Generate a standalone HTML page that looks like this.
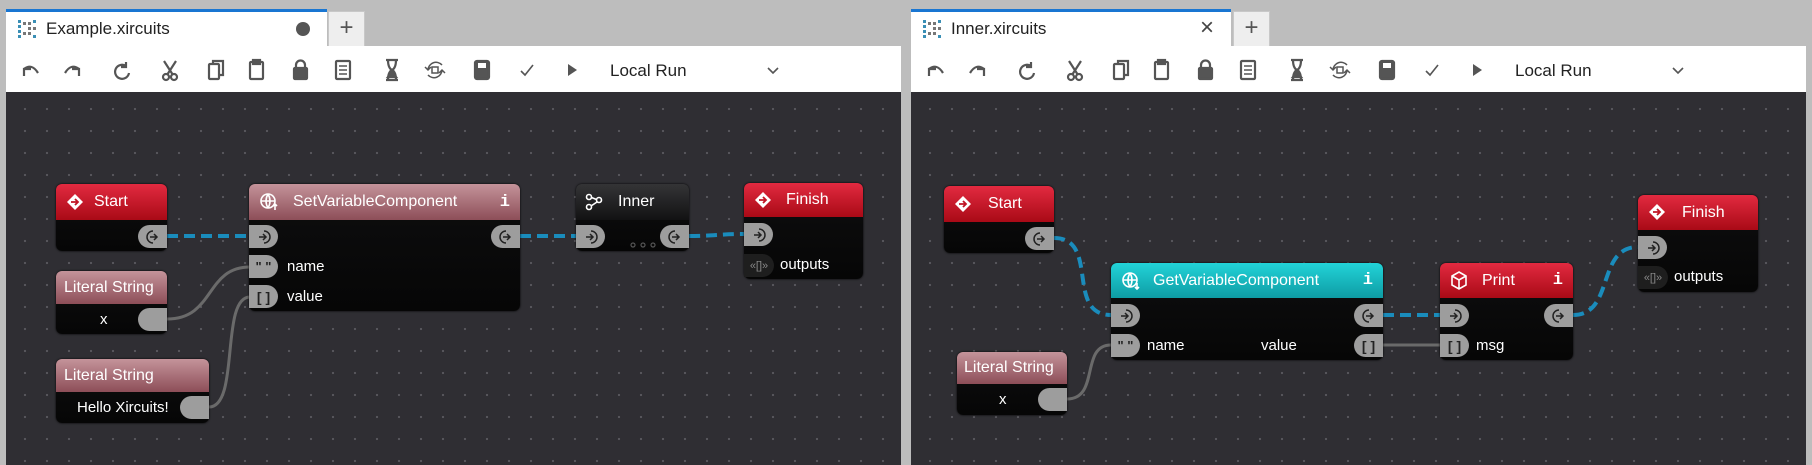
<!DOCTYPE html>
<html><head><meta charset="utf-8"><style>
*{box-sizing:border-box;margin:0;padding:0}
body{width:1812px;height:465px;background:#bdbdbd;position:relative;overflow:hidden;font-family:"Liberation Sans",Arial,sans-serif}
.abs{position:absolute}
.tab{position:absolute;top:9px;height:37px;background:#fff;border-top:3px solid #1976d2;font-size:17px;color:#222}
.plus{position:absolute;top:11px;height:35px;width:37px;background:#eee;border:1px solid #c8c8c8;border-bottom:none;font-size:24px;color:#555;text-align:center;line-height:32px}
.tb{position:absolute;top:46px;height:46px;width:895px;background:#fff}
.canvas{position:absolute;top:92px;height:373px;width:895px;background-color:#2f2e33;background-image:radial-gradient(circle,#56555b 1.1px,transparent 1.3px);background-size:22px 22px;background-position:8px 6px}
.node{position:absolute;background:linear-gradient(#0e0e0f,#060606);border-radius:6px;box-shadow:0 0 2px #000;color:#fff;font-size:15px}
.hdr{position:absolute;left:0;top:0;right:0;border-radius:6px 6px 0 0;font-size:16px;padding-left:38px;display:flex;align-items:center}
.red{background:linear-gradient(#e22a40,#a90a16)}
.pink{background:linear-gradient(#c4939a,#8d4e58)}
.dark{background:linear-gradient(#343436,#121213)}
.teal{background:linear-gradient(#22d3d8,#0e9ca4)}
.p{position:absolute;width:29px;height:23px;background:#9d9d9d;display:flex;align-items:center;justify-content:center}
.pi{left:0;border-radius:0 12px 12px 0}
.po{right:0;border-radius:12px 0 0 12px}
.lbl{position:absolute;font-size:15px;color:#fff}
.info{position:absolute;right:10px;font-family:"Liberation Mono",monospace;font-size:17px;font-weight:bold}
</style></head><body>

<!-- LEFT PANEL -->
<div class="tab" style="left:6px;width:321px">
 <svg class="abs" style="left:11px;top:7px" width="20" height="20" viewBox="0 0 20 20"><g fill="#3a8fb5"><rect x="1" y="1" width="3" height="3"/><rect x="1" y="6" width="3" height="3"/><rect x="1" y="11" width="3" height="3"/><rect x="1" y="16" width="3" height="3"/><rect x="16" y="1" width="3" height="3"/><rect x="16" y="16" width="3" height="3"/></g><g fill="#777"><rect x="6" y="3" width="3" height="3"/><rect x="11" y="8" width="3" height="3"/><rect x="6" y="13" width="3" height="3"/><rect x="11" y="3" width="3" height="3"/><rect x="11" y="13" width="3" height="3"/><rect x="16" y="8" width="3" height="3"/></g></svg>
 <span class="abs" style="left:40px;top:7px">Example.xircuits</span>
 <span class="abs" style="left:290px;top:10px;width:14px;height:14px;border-radius:50%;background:#555"></span>
</div>
<div class="plus" style="left:328px">+</div>
<div class="tb" style="left:6px"></div>
<div class="canvas" style="left:6px"></div>

<!-- RIGHT PANEL -->
<div class="tab" style="left:911px;width:320px">
 <svg class="abs" style="left:11px;top:7px" width="20" height="20" viewBox="0 0 20 20"><g fill="#3a8fb5"><rect x="1" y="1" width="3" height="3"/><rect x="1" y="6" width="3" height="3"/><rect x="1" y="11" width="3" height="3"/><rect x="1" y="16" width="3" height="3"/><rect x="16" y="1" width="3" height="3"/><rect x="16" y="16" width="3" height="3"/></g><g fill="#777"><rect x="6" y="3" width="3" height="3"/><rect x="11" y="8" width="3" height="3"/><rect x="6" y="13" width="3" height="3"/><rect x="11" y="3" width="3" height="3"/><rect x="11" y="13" width="3" height="3"/><rect x="16" y="8" width="3" height="3"/></g></svg>
 <span class="abs" style="left:40px;top:7px">Inner.xircuits</span>
 <span class="abs" style="left:289px;top:2px;font-size:24px;color:#444">×</span>
</div>
<div class="plus" style="left:1233px">+</div>
<div class="tb" style="left:911px"></div>
<div class="canvas" style="left:911px"></div>

<!-- toolbars -->
<svg class="abs" style="left:0;top:46px" width="1812" height="46">
<defs>
<g id="tools" fill="none" stroke="#555" stroke-width="2.2">
 <path d="M22 30 v-7 h7 M22 23 q8-6 14 4"/>
 <path d="M77 30 v-7 h-7 M77 23 q-8-6 -14 4"/>
 <path d="M124 20 a7 7 0 1 0 3 7 M124 16 v5 h-5"/>
 <circle cx="164" cy="31" r="3"/><circle cx="172" cy="31" r="3"/><path d="M165 29 l9-14 M171 29 l-9-14"/>
 <rect x="207" y="18" width="10" height="15" rx="1"/><path d="M211 18 v-3 h10 v14 h-4"/>
 <rect x="248" y="16" width="13" height="17" rx="1"/><rect x="251" y="14" width="7" height="4" fill="#555"/>
 <path d="M294 22 v-3 a4.5 4.5 0 0 1 9 0 v3"/><rect x="292" y="22" width="13" height="11" rx="1" fill="#555"/>
 <rect x="334" y="15" width="14" height="18" rx="1"/><path d="M337 20 h8 M337 24 h8 M337 28 h8" stroke-width="1.5"/>
 <path d="M384 14 h12 M384 34 h12 M386 14 q0 8 4 10 q-4 2 -4 10 M394 14 q0 8 -4 10 q4 2 4 10" /><path d="M386 31 h8 l-4 -5z" fill="#555"/>
 <path d="M426 24 a8 8 0 0 1 14 -5 M440 24 a8 8 0 0 1 -14 5 M423 21 l3 3 3-3 M443 27 l-3-3 -3 3" stroke-width="1.5"/><rect x="430" y="21" width="6" height="6" stroke-width="1.5"/>
 <rect x="473" y="15" width="14" height="18" rx="2" fill="#555"/><rect x="476" y="17" width="8" height="5" fill="#fff" stroke="none"/>
 <path d="M519 25 l4 4 8-10" stroke-width="1.6"/>
 <path d="M566 18 l9 6 -9 6z" fill="#555" stroke="none"/>
 <path d="M766 22 l5 5 5-5" stroke-width="1.6"/>
</g>
</defs>
<use href="#tools" x="2"/>
<use href="#tools" x="907"/>
<text x="610" y="30" font-size="17" fill="#222" font-family="Liberation Sans,sans-serif">Local Run</text>
<text x="1515" y="30" font-size="17" fill="#222" font-family="Liberation Sans,sans-serif">Local Run</text>
</svg>

<!-- links -->
<svg class="abs" style="left:0;top:0;z-index:1" width="1812" height="465" fill="none">
 <g stroke="#1a8cbc" stroke-width="4" stroke-dasharray="11 6">
  <path d="M167 236 H250"/>
  <path d="M520 236 H576"/>
  <path d="M689 236 C715 236 718 234 744 234"/>
  <path d="M1054 238 C1100 238 1065 315 1111 315"/>
  <path d="M1383 315 H1440"/>
  <path d="M1573 315 C1615 315 1596 247 1638 247"/>
 </g>
 <g stroke="#6a6a6a" stroke-width="3">
  <path d="M167 319 C215 319 205 267 250 267"/>
  <path d="M209 407 C240 407 220 297 250 297"/>
  <path d="M1067 399 C1100 399 1080 345 1111 345"/>
  <path d="M1383 345 H1440"/>
 </g>
</svg>

<div style="position:absolute;left:0;top:0;z-index:2">
<!-- LEFT NODES -->
<div class="node" style="left:56px;top:184px;width:111px;height:67px">
 <div class="hdr red" style="height:36px">Start</div>
 <svg class="abs" style="left:10px;top:9px" width="18" height="18" viewBox="0 0 18 18"><path d="M9 1 L17 9 L9 17 L1 9Z" fill="#fff"/><path d="M5 9 h6 M9 6 l3 3 -3 3" stroke="#c01525" stroke-width="1.8" fill="none"/></svg>
 <div class="p po" style="top:41px"><svg width="16" height="16" viewBox="0 0 16 16" fill="none" stroke="#222" stroke-width="1.5"><path d="M8 2 a6 6 0 0 0 0 12"/><path d="M5 8 h7 M9 5 l3 3 -3 3"/></svg></div>
</div>

<div class="node" style="left:249px;top:184px;width:271px;height:127px">
 <div class="hdr pink" style="height:36px;padding-left:44px">SetVariableComponent<span class="info">i</span></div>
 <svg class="abs" style="left:10px;top:8px" width="20" height="20" viewBox="0 0 20 20" fill="none" stroke="#fff" stroke-width="1.6"><circle cx="9" cy="9" r="7"/><path d="M2 9h14 M9 2 q-4 7 0 14 M9 2 q4 7 0 14"/><path d="M16 18 v-6 M14 14 l2-2 2 2"/></svg>
 <div class="p pi" style="top:41px"><svg width="16" height="16" viewBox="0 0 16 16" fill="none" stroke="#222" stroke-width="1.5"><path d="M8 2 a6 6 0 0 1 0 12"/><path d="M3 8 h7 M7 5 l3 3 -3 3"/></svg></div>
 <div class="p po" style="top:41px"><svg width="16" height="16" viewBox="0 0 16 16" fill="none" stroke="#222" stroke-width="1.5"><path d="M8 2 a6 6 0 0 0 0 12"/><path d="M5 8 h7 M9 5 l3 3 -3 3"/></svg></div>
 <div class="p pi" style="top:71px;font-size:13px;color:#222;font-weight:bold">" "</div>
 <div class="lbl" style="left:38px;top:74px">name</div>
 <div class="p pi" style="top:101px;font-size:14px;color:#222;font-weight:bold">[ ]</div>
 <div class="lbl" style="left:38px;top:104px">value</div>
</div>

<div class="node" style="left:576px;top:184px;width:113px;height:67px">
 <div class="hdr dark" style="height:36px;padding-left:42px">Inner</div>
 <svg class="abs" style="left:9px;top:9px" width="18" height="18" viewBox="0 0 18 18" fill="none" stroke="#fff" stroke-width="1.6"><circle cx="4" cy="4" r="2.5"/><circle cx="14" cy="7" r="2.5"/><circle cx="4" cy="14" r="2.5"/><path d="M6.5 4.5 L11.5 6.5 M12 9 L6 13"/></svg>
 <div class="p pi" style="top:41px"><svg width="16" height="16" viewBox="0 0 16 16" fill="none" stroke="#222" stroke-width="1.5"><path d="M8 2 a6 6 0 0 1 0 12"/><path d="M3 8 h7 M7 5 l3 3 -3 3"/></svg></div>
 <div class="p po" style="top:41px"><svg width="16" height="16" viewBox="0 0 16 16" fill="none" stroke="#222" stroke-width="1.5"><path d="M8 2 a6 6 0 0 0 0 12"/><path d="M5 8 h7 M9 5 l3 3 -3 3"/></svg></div>
 <svg class="abs" style="left:54px;top:58px" width="26" height="8" viewBox="0 0 26 8" fill="none" stroke="#555" stroke-width="1.2"><circle cx="3" cy="3" r="2"/><circle cx="13" cy="3" r="2"/><circle cx="23" cy="3" r="2"/></svg>
</div>

<div class="node" style="left:744px;top:183px;width:119px;height:96px">
 <div class="hdr red" style="height:34px;padding-left:42px">Finish</div>
 <svg class="abs" style="left:10px;top:8px" width="18" height="18" viewBox="0 0 18 18"><path d="M9 1 L17 9 L9 17 L1 9Z" fill="#fff"/><path d="M5 9 h6 M9 6 l3 3 -3 3" stroke="#c01525" stroke-width="1.8" fill="none"/></svg>
 <div class="p pi" style="top:40px"><svg width="16" height="16" viewBox="0 0 16 16" fill="none" stroke="#222" stroke-width="1.5"><path d="M8 2 a6 6 0 0 1 0 12"/><path d="M3 8 h7 M7 5 l3 3 -3 3"/></svg></div>
 <div class="p pi" style="top:71px;background:#1e1e1e;color:#888;font-size:11px;width:30px">«[]»</div>
 <div class="lbl" style="left:36px;top:73px">outputs</div>
</div>

<div class="node" style="left:56px;top:271px;width:111px;height:63px">
 <div class="hdr pink" style="height:33px;padding-left:8px">Literal String</div>
 <div class="lbl" style="left:44px;top:40px">x</div>
 <div class="p po" style="top:37px"></div>
</div>

<div class="node" style="left:56px;top:359px;width:153px;height:64px">
 <div class="hdr pink" style="height:33px;padding-left:8px">Literal String</div>
 <div class="lbl" style="left:21px;top:40px">Hello Xircuits!</div>
 <div class="p po" style="top:37px"></div>
</div>

<!-- RIGHT NODES -->
<div class="node" style="left:944px;top:186px;width:110px;height:67px">
 <div class="hdr red" style="height:36px;padding-left:44px">Start</div>
 <svg class="abs" style="left:10px;top:9px" width="18" height="18" viewBox="0 0 18 18"><path d="M9 1 L17 9 L9 17 L1 9Z" fill="#fff"/><path d="M5 9 h6 M9 6 l3 3 -3 3" stroke="#c01525" stroke-width="1.8" fill="none"/></svg>
 <div class="p po" style="top:41px"><svg width="16" height="16" viewBox="0 0 16 16" fill="none" stroke="#222" stroke-width="1.5"><path d="M8 2 a6 6 0 0 0 0 12"/><path d="M5 8 h7 M9 5 l3 3 -3 3"/></svg></div>
</div>

<div class="node" style="left:1111px;top:263px;width:272px;height:97px">
 <div class="hdr teal" style="height:35px;padding-left:42px">GetVariableComponent<span class="info">i</span></div>
 <svg class="abs" style="left:10px;top:8px" width="20" height="20" viewBox="0 0 20 20" fill="none" stroke="#fff" stroke-width="1.6"><circle cx="9" cy="9" r="7"/><path d="M2 9h14 M9 2 q-4 7 0 14 M9 2 q4 7 0 14"/><path d="M16 12 v6 M14 16 l2 2 2-2"/></svg>
 <div class="p pi" style="top:41px"><svg width="16" height="16" viewBox="0 0 16 16" fill="none" stroke="#222" stroke-width="1.5"><path d="M8 2 a6 6 0 0 1 0 12"/><path d="M3 8 h7 M7 5 l3 3 -3 3"/></svg></div>
 <div class="p po" style="top:41px"><svg width="16" height="16" viewBox="0 0 16 16" fill="none" stroke="#222" stroke-width="1.5"><path d="M8 2 a6 6 0 0 0 0 12"/><path d="M5 8 h7 M9 5 l3 3 -3 3"/></svg></div>
 <div class="p pi" style="top:71px;font-size:13px;color:#222;font-weight:bold">" "</div>
 <div class="lbl" style="left:36px;top:74px">name</div>
 <div class="lbl" style="left:150px;top:74px">value</div>
 <div class="p po" style="top:71px;font-size:14px;color:#222;font-weight:bold">[ ]</div>
</div>

<div class="node" style="left:1440px;top:263px;width:133px;height:97px">
 <div class="hdr red" style="height:35px;padding-left:42px">Print<span class="info">i</span></div>
 <svg class="abs" style="left:10px;top:8px" width="18" height="20" viewBox="0 0 18 20" fill="none" stroke="#fff" stroke-width="1.6"><path d="M9 1 L16 5 V14 L9 18 L2 14 V5Z M2 5 L9 9 L16 5 M9 9 V18"/></svg>
 <div class="p pi" style="top:41px"><svg width="16" height="16" viewBox="0 0 16 16" fill="none" stroke="#222" stroke-width="1.5"><path d="M8 2 a6 6 0 0 1 0 12"/><path d="M3 8 h7 M7 5 l3 3 -3 3"/></svg></div>
 <div class="p po" style="top:41px"><svg width="16" height="16" viewBox="0 0 16 16" fill="none" stroke="#222" stroke-width="1.5"><path d="M8 2 a6 6 0 0 0 0 12"/><path d="M5 8 h7 M9 5 l3 3 -3 3"/></svg></div>
 <div class="p pi" style="top:71px;font-size:14px;color:#222;font-weight:bold">[ ]</div>
 <div class="lbl" style="left:36px;top:74px">msg</div>
</div>

<div class="node" style="left:1638px;top:195px;width:120px;height:97px">
 <div class="hdr red" style="height:35px;padding-left:44px">Finish</div>
 <svg class="abs" style="left:10px;top:8px" width="18" height="18" viewBox="0 0 18 18"><path d="M9 1 L17 9 L9 17 L1 9Z" fill="#fff"/><path d="M5 9 h6 M9 6 l3 3 -3 3" stroke="#c01525" stroke-width="1.8" fill="none"/></svg>
 <div class="p pi" style="top:41px"><svg width="16" height="16" viewBox="0 0 16 16" fill="none" stroke="#222" stroke-width="1.5"><path d="M8 2 a6 6 0 0 1 0 12"/><path d="M3 8 h7 M7 5 l3 3 -3 3"/></svg></div>
 <div class="p pi" style="top:71px;background:#1e1e1e;color:#888;font-size:11px;width:30px">«[]»</div>
 <div class="lbl" style="left:36px;top:73px">outputs</div>
</div>

<div class="node" style="left:957px;top:352px;width:110px;height:63px">
 <div class="hdr pink" style="height:32px;padding-left:7px">Literal String</div>
 <div class="lbl" style="left:42px;top:39px">x</div>
 <div class="p po" style="top:36px"></div>
</div>
</div>
</body></html>
